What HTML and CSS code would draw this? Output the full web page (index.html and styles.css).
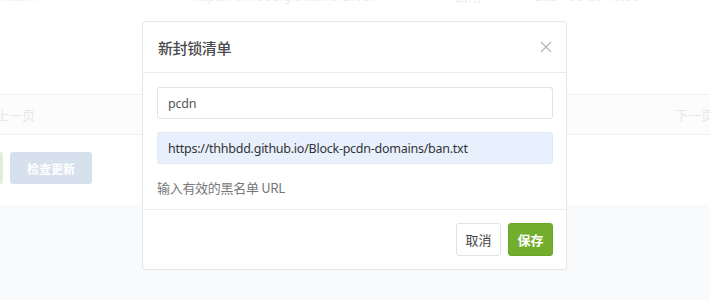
FILE: index.html
```html
<!DOCTYPE html>
<html lang="zh-CN">
<head>
<meta charset="utf-8">
<title>新封锁清单</title>
<link rel="stylesheet" href="styles.css">
</head>
<body>
<div class="page">
  <div class="top-row">
    <span class="c1">n.com</span>
    <span class="c2">https://thhbdd.github.io/Block-</span>
    <span class="c3">启用</span>
    <span class="c4">2024-09-05 10:00</span>
  </div>
  <div class="pager">
    <span>上一页</span>
    <span>下一页</span>
  </div>
  <div class="actions">
    <button class="btn-ghost-green">新增</button>
    <button class="btn-ghost-blue">检查更新</button>
  </div>
  <div class="lower"></div>
</div>

<div class="modal">
  <div class="modal-header">
    <h4 class="modal-title">新封锁清单</h4>
    <button class="close" aria-label="关闭">
      <svg width="12" height="12" viewBox="0 0 12 12"><path d="M1 1L11 11M11 1L1 11" stroke="#b5b5b5" stroke-width="1.2" fill="none"/></svg>
    </button>
  </div>
  <div class="modal-body">
    <input class="field" type="text" value="pcdn">
    <input class="field autofill" type="text" value="https://thhbdd.github.io/Block-pcdn-domains/ban.txt">
    <p class="help">输入有效的黑名单 URL</p>
  </div>
  <div class="modal-footer">
    <button class="btn btn-default">取消</button>
    <button class="btn btn-primary">保存</button>
  </div>
</div>
</body>
</html>
```

FILE: styles.css
```css
html, body {
  margin: 0;
  padding: 0;
  background: #ffffff;
  font-family: "Noto Sans", "Noto Sans CJK SC", sans-serif;
  width: 710px;
  height: 300px;
  overflow: hidden;
}

.page {
  display: flex;
  flex-direction: column;
  height: 300px;
}

.top-row {
  height: 16px;
  margin-top: -12px;
  display: flex;
  font-size: 13px;
  line-height: 16px;
  color: #ededed;
  white-space: nowrap;
}
.top-row .c1 { width: 190px; }
.top-row .c2 { width: 265px; }
.top-row .c3 { width: 80px; }
.top-row .c4 { width: 140px; }

.pager {
  margin-top: 90px;
  height: 39px;
  border-top: 1px solid #f2f2f2;
  border-bottom: 1px solid #f0f0f0;
  background: #fcfcfc;
  display: flex;
  justify-content: space-between;
  align-items: center;
  font-family: "Noto Sans CJK SC", sans-serif;
  font-size: 13px;
  color: #e8e8e8;
  margin-left: -4px;
  margin-right: -4px;
}

.actions {
  margin-top: 17px;
  display: flex;
  gap: 7px;
  margin-left: -42px;
}
.actions button {
  height: 32px;
  border: 0;
  border-radius: 3px;
  font-family: "Noto Sans CJK SC", sans-serif;
  font-size: 12px;
  font-weight: 700;
  color: #ffffff;
  padding: 0 16px;
}
.btn-ghost-green { width: 45px; background: #e3eed4; }
.btn-ghost-blue { width: 82px; background: #d7e1ee; }

.lower {
  margin-top: 21px;
  flex: 1;
  background: #f8fafc;
}

.modal {
  position: absolute;
  left: 142px;
  top: 21px;
  width: 423px;
  height: 247px;
  background: #ffffff;
  border: 1px solid #e6e6e6;
  border-radius: 3px;
  display: flex;
  flex-direction: column;
}

.modal-header {
  height: 50px;
  border-bottom: 1px solid #ececec;
  display: flex;
  align-items: center;
  justify-content: space-between;
  padding: 0 13px 0 15px;
}
.modal-title {
  margin: 0;
  font-family: "Noto Sans CJK SC", sans-serif;
  font-size: 15px;
  font-weight: 500;
  color: #4a4a4a;
  letter-spacing: -0.4px;
}
.close {
  border: 0;
  background: none;
  padding: 0;
  width: 14px;
  height: 14px;
  display: flex;
  align-items: center;
  justify-content: center;
}

.modal-body {
  padding: 14px 13px 0 14px;
  height: 122px;
  border-bottom: 1px solid #ececec;
  display: flex;
  flex-direction: column;
}
.field {
  box-sizing: border-box;
  height: 32px;
  width: 396px;
  border: 1px solid #e2e2e2;
  border-radius: 3px;
  padding: 0 10px;
  font-family: "Noto Sans", sans-serif;
  font-size: 12.5px;
  letter-spacing: -0.25px;
  color: #555555;
  background: #ffffff;
  outline: none;
}
.field + .field { margin-top: 13px; }
.field.autofill {
  background: #e8f0fe;
  border-color: #e2e8f2;
  color: #333333;
}
.help {
  margin: 15px 0 0 0;
  font-family: "Noto Sans CJK SC", sans-serif;
  font-size: 13px;
  color: #777777;
  line-height: 18px;
  letter-spacing: -0.3px;
}

.modal-footer {
  flex: 1;
  display: flex;
  justify-content: flex-end;
  align-items: center;
  gap: 7px;
  padding: 0 13px 0 0;
}
.btn {
  box-sizing: border-box;
  height: 33px;
  width: 45px;
  border-radius: 3px;
  font-family: "Noto Sans CJK SC", sans-serif;
  font-size: 13px;
  padding: 0;
}
.btn-default {
  background: #ffffff;
  border: 1px solid #e2e2e2;
  color: #444444;
}
.btn-primary {
  background: #72ad2e;
  border: 1px solid #6aa62a;
  color: #ffffff;
  font-weight: 700;
}
```
